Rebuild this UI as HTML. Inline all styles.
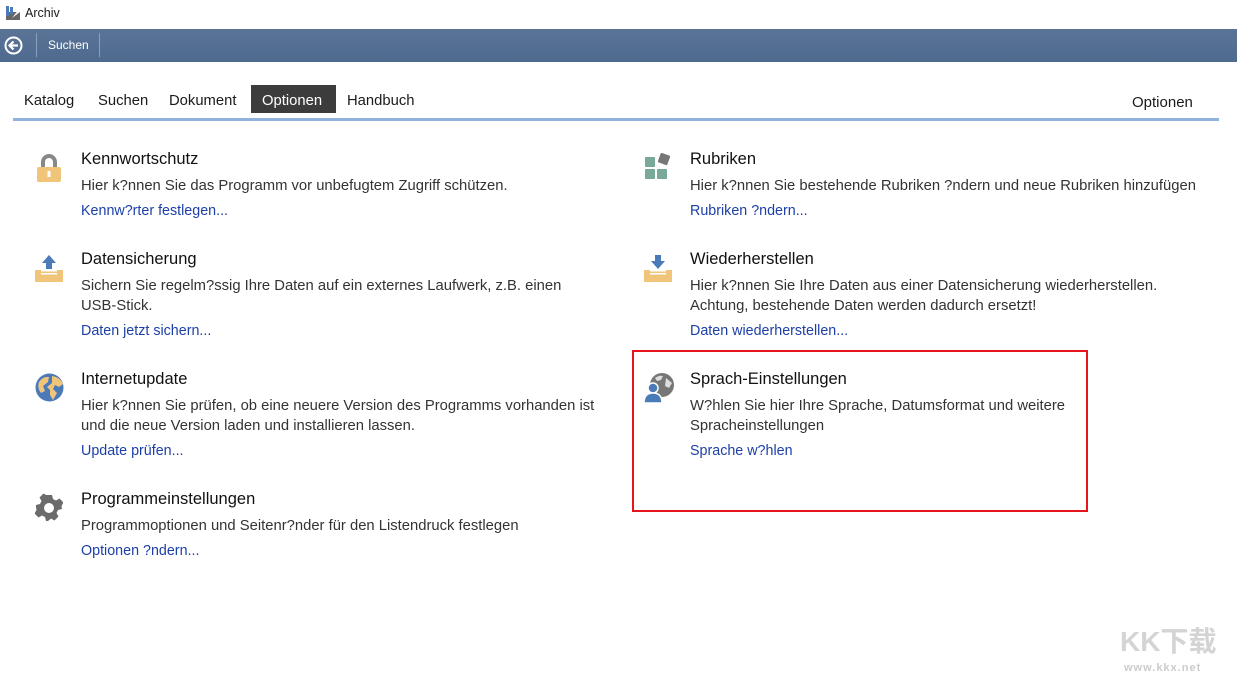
<!DOCTYPE html>
<html><head><meta charset="utf-8"><style>
*{margin:0;padding:0;box-sizing:border-box}
body{width:1237px;height:677px;background:#fff;font-family:"Liberation Sans",sans-serif;position:relative;overflow:hidden;color:#1a1a1a}
.a{position:absolute;white-space:nowrap}
.t{font-size:16.5px;color:#111}
.d{font-size:14.8px;color:#333;line-height:20px}
.l{font-size:14.3px;color:#1c3fa8}
.tab{font-size:14.8px;top:93px}
</style></head><body>
<svg class="a" style="left:6px;top:6px" width="14" height="14"><rect x="0" y="6" width="14" height="8" fill="#666"/><rect x="0" y="0" width="3" height="10" fill="#4a7ab8"/><rect x="4" y="1" width="3" height="7" fill="#4a7ab8"/><path d="M6 12 L14 2 L14 6Z" fill="#fff"/></svg>
<div class="a" style="left:25px;top:6px;font-size:12.5px">Archiv</div>
<div class="a" style="left:0;top:29px;width:1237px;height:33px;background:linear-gradient(#5a7497,#4e6a8e)"></div>
<svg class="a" style="left:4px;top:36px" width="19" height="19"><circle cx="9.5" cy="9.5" r="8" fill="none" stroke="#fff" stroke-width="2"/><path d="M14 9.5H6M9.5 5.5L5.5 9.5L9.5 13.5" fill="none" stroke="#fff" stroke-width="2.2"/></svg>
<div class="a" style="left:36px;top:33px;width:1px;height:24px;background:#8aa0bc"></div>
<div class="a" style="left:48px;top:38px;font-size:12px;color:#fff">Suchen</div>
<div class="a" style="left:99px;top:33px;width:1px;height:24px;background:#8aa0bc"></div>
<div class="a tab" style="left:24px">Katalog</div>
<div class="a tab" style="left:98px">Suchen</div>
<div class="a tab" style="left:169px">Dokument</div>
<div class="a" style="left:251px;top:85px;width:85px;height:28px;background:#3c3c3c"></div>
<div class="a tab" style="left:262px;color:#fff">Optionen</div>
<div class="a tab" style="left:347px">Handbuch</div>
<div class="a" style="left:1132px;top:94px;font-size:15px">Optionen</div>
<div class="a" style="left:13px;top:118px;width:1206px;height:3px;background:#8fb3dc"></div>

<svg class="a" style="left:35px;top:153px" width="28" height="30"><path d="M8 14V9a6 6 0 0 1 12 0v5" fill="none" stroke="#888" stroke-width="4"/><rect x="2" y="14" width="24" height="15" rx="2" fill="#f0c57a"/><rect x="12.5" y="18" width="3" height="6" fill="#fff"/></svg>
<svg class="a" style="left:34px;top:253px" width="30" height="30"><rect x="1" y="17" width="28" height="12" fill="#f0c57a"/><rect x="7" y="17" width="16" height="1.5" fill="#fff"/><rect x="7" y="20" width="16" height="1.5" fill="#fff"/><path d="M15 2L22 10H18V16H12V10H8Z" fill="#4a7ab8"/></svg>
<svg class="a" style="left:35px;top:373px" width="30" height="30"><circle cx="14.5" cy="14.5" r="14" fill="#4a7ab8"/><path d="M4 9Q8 3 14 4L13 9L8 13L10 18L6 20Q2 15 4 9ZM17 3Q25 4 28 11L24 14L20 12L18 16L22 20L18 27L15 22L15 17L12 14L17 10Z" fill="#f0c57a"/></svg>
<svg class="a" style="left:35px;top:493px" width="28" height="30" viewBox="0 0 28 28"><path d="M11 1h6l1 4 3 1.5 3.5-2 4 4-2 3.5L27 15l-4 1-1.5 3 2 3.5-4 4-3.5-2L13 27h-2l-1-4-3-1.5-3.5 2-4-4 2-3.5L1 13v-2l4-1 1.5-3-2-3.5 4-4 3.5 2Z" fill="#6b6b6b"/><circle cx="14" cy="14" r="5" fill="#fff"/></svg>

<svg class="a" style="left:644px;top:153px" width="30" height="28"><rect x="1" y="4" width="10" height="10" rx="1" fill="#78a898"/><rect x="1" y="16" width="10" height="10" rx="1" fill="#78a898"/><rect x="13" y="16" width="10" height="10" rx="1" fill="#78a898"/><rect x="15" y="1" width="10" height="10" rx="1" fill="#777" transform="rotate(20 20 6)"/></svg>
<svg class="a" style="left:643px;top:253px" width="30" height="30"><rect x="1" y="17" width="28" height="12" fill="#f0c57a"/><rect x="7" y="17" width="16" height="1.5" fill="#fff"/><rect x="7" y="20" width="16" height="1.5" fill="#fff"/><path d="M15 16L22 8H18V2H12V8H8Z" fill="#4a7ab8"/></svg>
<svg class="a" style="left:643px;top:372px" width="32" height="32"><circle cx="19" cy="13" r="12" fill="#777"/><path d="M12 6Q16 3 20 4L18 8L14 9ZM23 6L29 11L26 16L22 14Z" fill="#ddd"/><circle cx="10" cy="16" r="5" fill="#4a7ab8" stroke="#fff" stroke-width="1.5"/><path d="M1 31Q1 21 10 21Q19 21 19 31Z" fill="#4a7ab8" stroke="#fff" stroke-width="1.5"/></svg>

<div class="a t" style="left:81px;top:150px">Kennwortschutz</div>
<div class="a d" style="left:81px;top:176px">Hier k?nnen Sie das Programm vor unbefugtem Zugriff schützen.</div>
<div class="a l" style="left:81px;top:203px">Kennw?rter festlegen...</div>

<div class="a t" style="left:81px;top:250px">Datensicherung</div>
<div class="a d" style="left:81px;top:276px">Sichern Sie regelm?ssig Ihre Daten auf ein externes Laufwerk, z.B. einen<br>USB-Stick.</div>
<div class="a l" style="left:81px;top:323px">Daten jetzt sichern...</div>

<div class="a t" style="left:81px;top:370px">Internetupdate</div>
<div class="a d" style="left:81px;top:396px">Hier k?nnen Sie prüfen, ob eine neuere Version des Programms vorhanden ist<br>und die neue Version laden und installieren lassen.</div>
<div class="a l" style="left:81px;top:443px">Update prüfen...</div>

<div class="a t" style="left:81px;top:490px">Programmeinstellungen</div>
<div class="a d" style="left:81px;top:516px">Programmoptionen und Seitenr?nder für den Listendruck festlegen</div>
<div class="a l" style="left:81px;top:543px">Optionen ?ndern...</div>

<div class="a t" style="left:690px;top:150px">Rubriken</div>
<div class="a d" style="left:690px;top:176px">Hier k?nnen Sie bestehende Rubriken ?ndern und neue Rubriken hinzufügen</div>
<div class="a l" style="left:690px;top:203px">Rubriken ?ndern...</div>

<div class="a t" style="left:690px;top:250px">Wiederherstellen</div>
<div class="a d" style="left:690px;top:276px">Hier k?nnen Sie Ihre Daten aus einer Datensicherung wiederherstellen.<br>Achtung, bestehende Daten werden dadurch ersetzt!</div>
<div class="a l" style="left:690px;top:323px">Daten wiederherstellen...</div>

<div class="a t" style="left:690px;top:370px">Sprach-Einstellungen</div>
<div class="a d" style="left:690px;top:396px">W?hlen Sie hier Ihre Sprache, Datumsformat und weitere<br>Spracheinstellungen</div>
<div class="a l" style="left:690px;top:443px">Sprache w?hlen</div>

<div class="a" style="left:632px;top:350px;width:456px;height:162px;border:2px solid #e8141c"></div>

<div class="a" style="left:1120px;top:620px;font-size:28px;font-weight:bold;color:#d4d4d4;font-family:'Liberation Sans','Noto Sans CJK SC',sans-serif">KK下载</div>
<div class="a" style="left:1124px;top:662px;font-size:11px;font-weight:bold;color:#ccc;letter-spacing:1px">www.kkx.net</div>
</body></html>
